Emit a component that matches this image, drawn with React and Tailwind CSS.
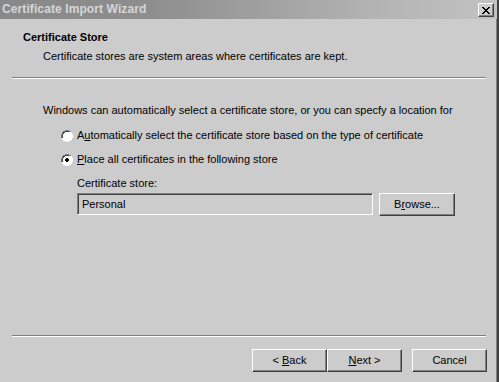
import React from 'react';

const Radio = ({ checked }) => (
  <svg width="12" height="12" viewBox="0 0 12 12" className="shrink-0">
    <path d="M4 0h4v1h2v1h1v2h1v4h-1v2h-1v1h-2v1h-4v-1h-2v-1h-1v-2h-1v-4h1v-2h1v-1h2z" fill="#ffffff" />
    <path d="M4 0h4v1h2v1h-2v-1h-4v1h-2v2h-1v4h-1v-4h1v-2h1v-1h2z" fill="#808080" />
    <path d="M4 1h4v1h-4v1h-1v1h-1v4h-1v-4h1v-2h2z" fill="#404040" />
    <path d="M10 2h1v2h1v4h-1v2h-1v1h-2v1h-4v-1h4v-1h2v-2h1v-4h-1z" fill="#ffffff" />
    {checked && <path d="M5 4h2v1h1v2h-1v1h-2v-1h-1v-2h1z" fill="#000000" />}
  </svg>
);

const Knopp = ({ children, className = '' }) => (
  <button
    className={
      'h-[23px] w-[75px] bg-[#cccccc] text-black border-t border-l border-white border-r border-b border-r-[#404040] border-b-[#404040] shadow-[inset_-1px_-1px_0_#808080] flex items-center justify-center ' +
      className
    }
  >
    <span>{children}</span>
  </button>
);

export default function App() {
  return (
    <div
      className="w-[499px] h-[382px] bg-[#cccccc] text-black text-[11px] leading-[13px] flex flex-col border-r-2 border-r-[#404040] shadow-[inset_-1px_0_0_#808080] overflow-hidden"
      style={{ fontFamily: '"Liberation Sans", Arial, sans-serif' }}
    >
      <div className="h-[19px] shrink-0 flex items-center justify-between pl-[2px] pr-[3px] bg-[linear-gradient(to_right,#888888,#8e8e8e_30%,#a2a2a2_55%,#b3b3b3_75%,#c2c2c2)]">
        <span className="font-bold text-[12px] text-[#d6d6d6] tracking-[0.1px]">Certificate Import Wizard</span>
        <div className="mt-[1px] h-[14px] w-[16px] bg-[#cccccc] border-t border-l border-white border-r border-b border-r-[#404040] border-b-[#404040] shadow-[inset_-1px_-1px_0_#808080] flex items-center justify-center">
          <svg width="8" height="7" viewBox="0 0 8 7">
            <path d="M0 0h2v1h1v1h2v-1h1v-1h2v1h-1v1h-1v1h-1v1h1v1h1v1h1v1h-2v-1h-1v-1h-2v1h-1v1h-2v-1h1v-1h1v-1h1v-1h-1v-1h-1v-1h-1z" fill="#000" />
          </svg>
        </div>
      </div>

      <div className="pl-[23px] mt-[12px] font-bold">Certificate Store</div>
      <div className="pl-[43px] mt-[6px]">Certificate stores are system areas where certificates are kept.</div>
      <div className="ml-[12px] w-[474px] mt-[14px] h-[2px] border-t border-t-[#808080] border-b border-b-white" />

      <div className="pl-[43px] mt-[25px]">Windows can automatically select a certificate store, or you can specfy a location for</div>

      <div className="pl-[61px] mt-[12px] flex items-center gap-[4px] h-[13px]">
        <Radio />
        <span>A<u>u</u>tomatically select the certificate store based on the type of certificate</span>
      </div>
      <div className="pl-[61px] mt-[11px] flex items-center gap-[4px] h-[13px]">
        <Radio checked />
        <span><u>P</u>lace all certificates in the following store</span>
      </div>

      <div className="pl-[77px] mt-[11px]">Certificate store:</div>
      <div className="pl-[77px] mt-[3px] flex gap-[6px]">
        <div className="h-[22px] w-[296px] border-t border-l border-[#808080] border-r border-b border-r-white border-b-white shadow-[inset_1px_1px_0_#404040] flex items-center pl-[4px]">
          Personal
        </div>
        <Knopp className="h-[22px] w-[76px]">
          B<u>r</u>owse...
        </Knopp>
      </div>

      <div className="ml-[12px] w-[474px] mt-[119px] h-[2px] border-t border-t-[#808080] border-b border-b-white" />

      <div className="mt-[12px] flex pl-[252px]">
        <Knopp>&lt; <u>B</u>ack</Knopp>
        <Knopp><u>N</u>ext &gt;</Knopp>
        <Knopp className="ml-[10px]">Cancel</Knopp>
      </div>
    </div>
  );
}
